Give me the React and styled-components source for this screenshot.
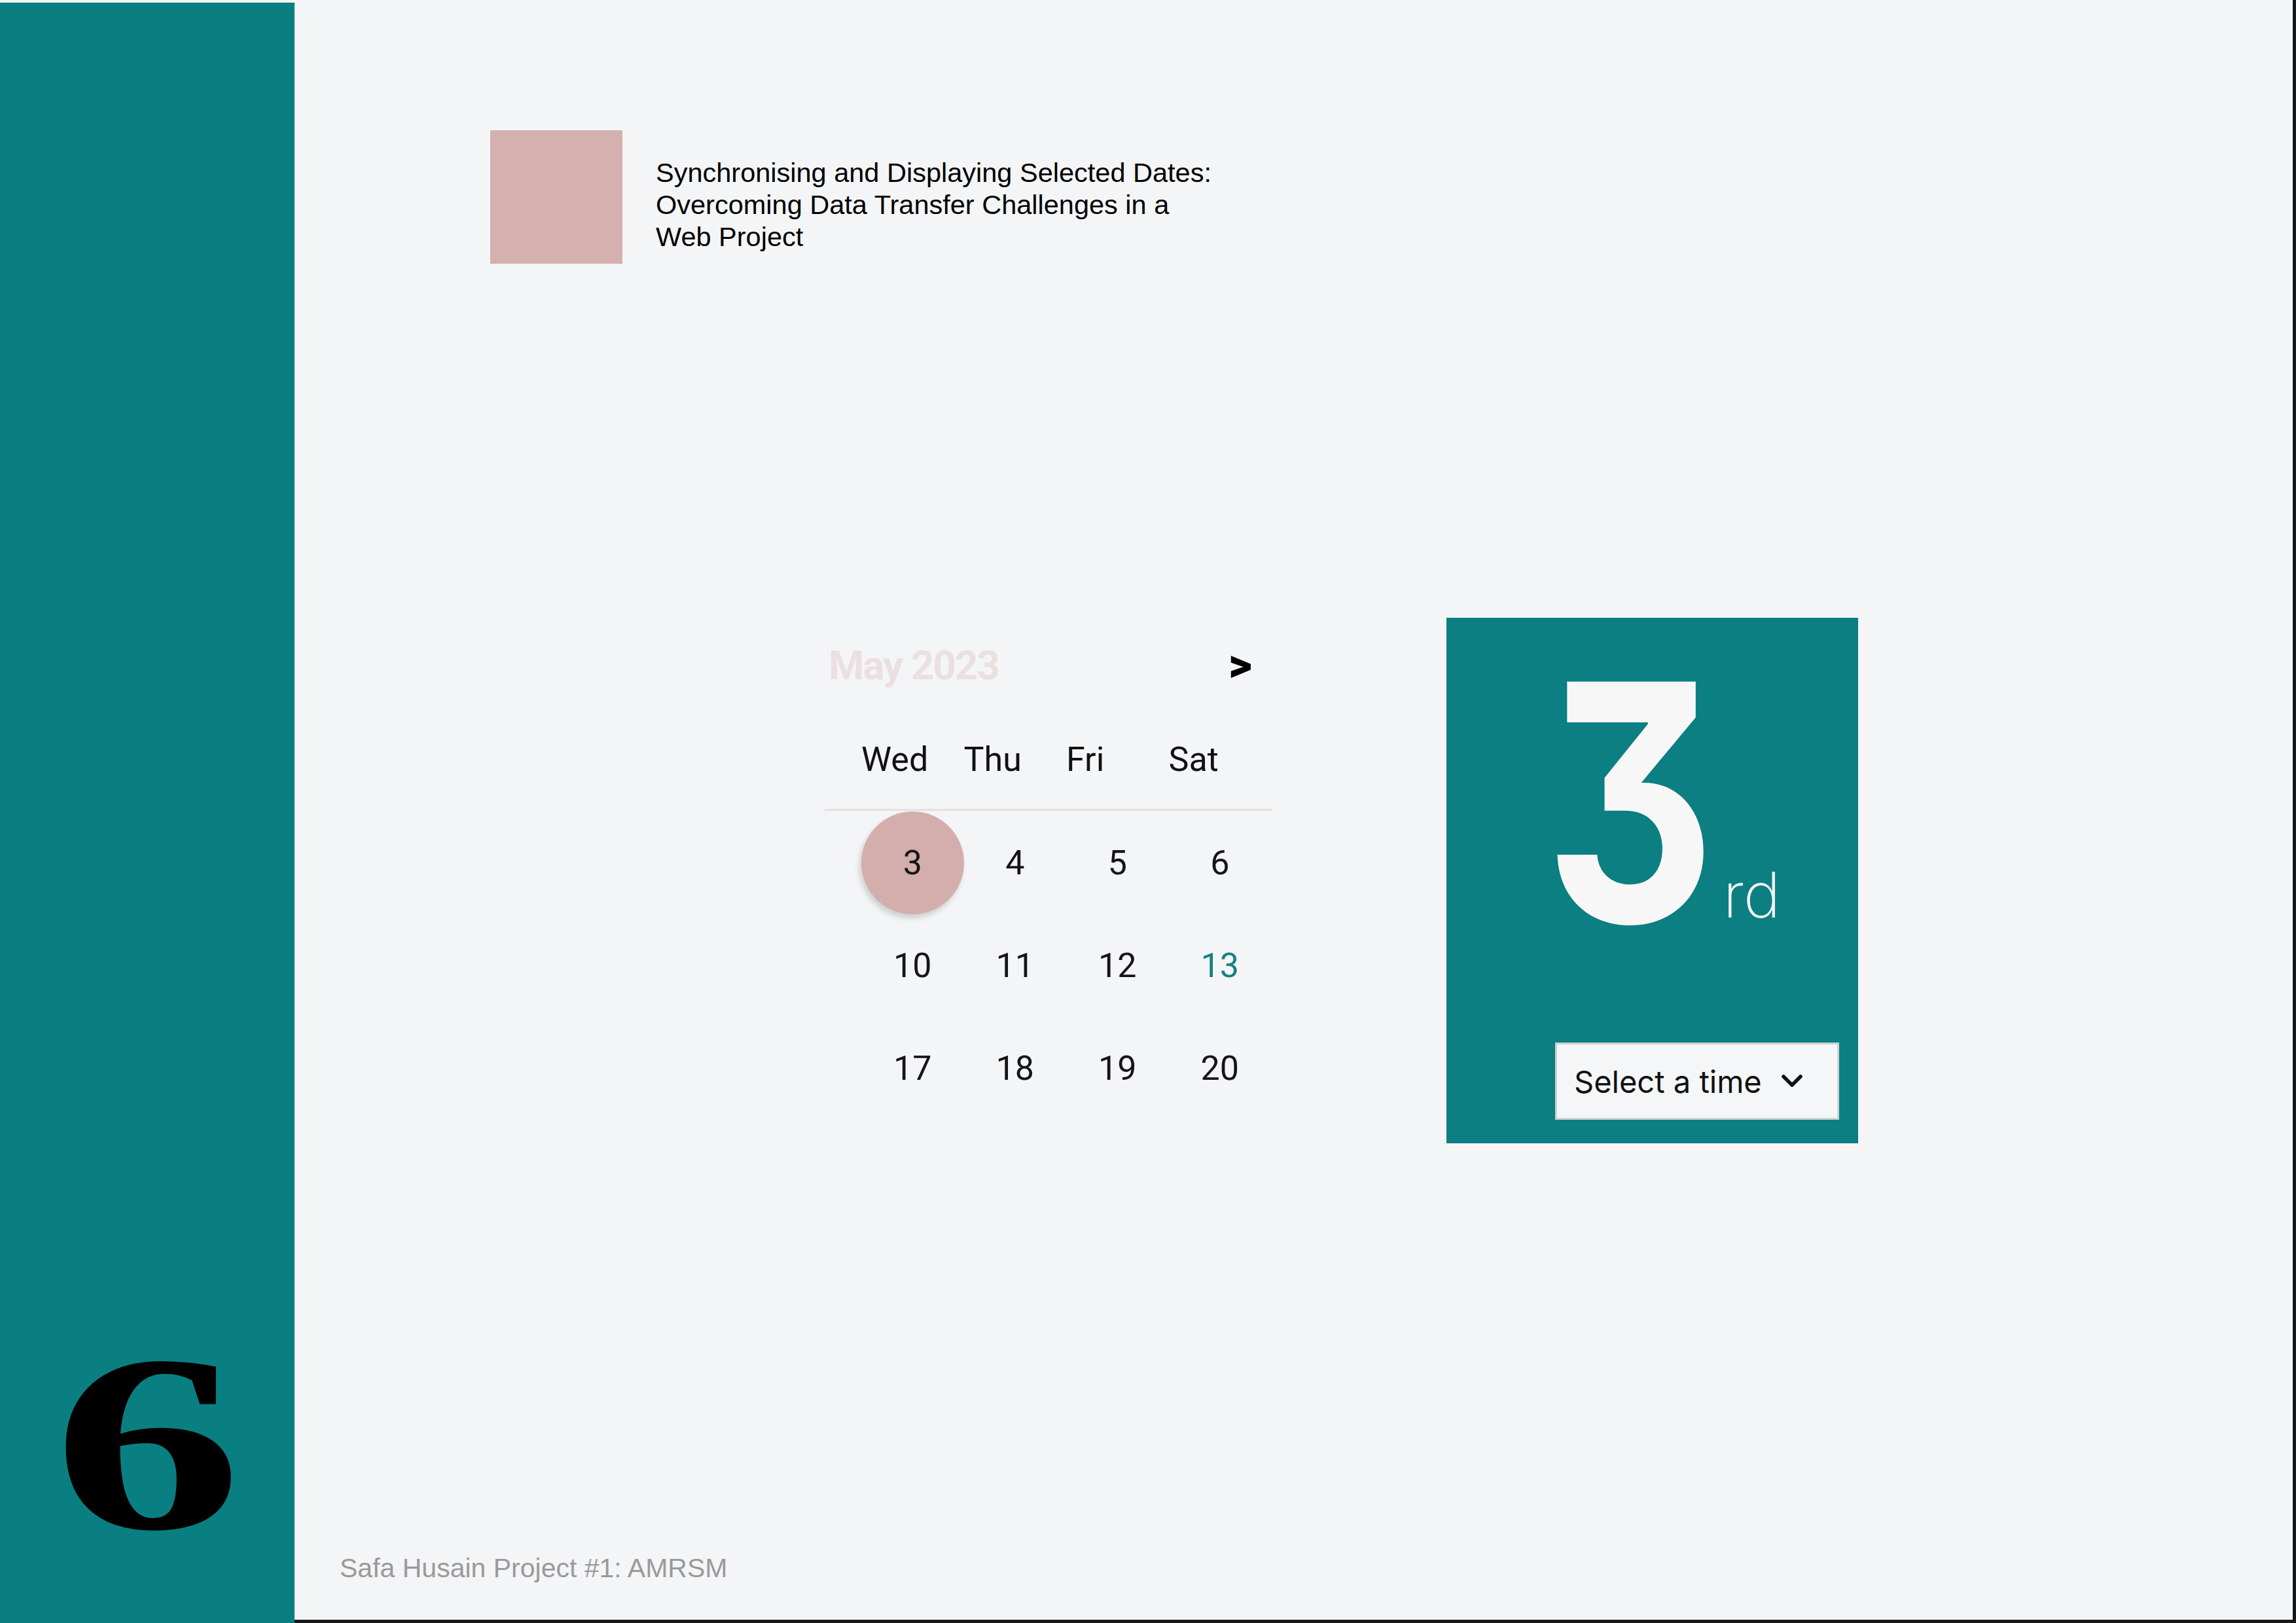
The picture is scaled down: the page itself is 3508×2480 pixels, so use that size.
import React from "react";
import styled, { createGlobalStyle } from "styled-components";

const GlobalStyle = createGlobalStyle`
  html, body {
    margin: 0;
    padding: 0;
    background: #f4f5f7;
  }
  * {
    box-sizing: border-box;
  }
`;

const Slide = styled.div`
  display: flex;
  width: 3508px;
  height: 2480px;
  overflow: hidden;
  background: #f4f5f7;
`;

// Left band with chapter number
const Sidebar = styled.aside`
  flex: 0 0 450px;
  margin-top: 4px;
  background: #0a7f81;
  display: flex;
  flex-direction: column;
  justify-content: flex-end;
  align-items: center;
  padding-bottom: 82px;
`;

const ChapterNumber = styled.div`
  font-family: "Liberation Serif", "Times New Roman", serif;
  font-weight: 700;
  font-size: 385px;
  line-height: 1;
  color: #000;
  transform: scaleX(1.5);
`;

const Main = styled.main`
  flex: 1;
  display: flex;
  flex-direction: column;
  border-right: 5px solid #171717;
  border-bottom: 5px solid #171717;
  padding: 199px 0 55px 0;
`;

const Header = styled.header`
  display: flex;
  align-items: flex-start;
  gap: 51px;
  margin-left: 299px;
`;

const Swatch = styled.div`
  width: 202px;
  height: 204px;
  background: #d4b0ae;
`;

const Title = styled.h1`
  margin: 40px 0 0;
  font-family: "Liberation Sans", Arial, sans-serif;
  font-weight: 400;
  font-size: 41.5px;
  line-height: 49px;
  color: #000;
`;

const Stage = styled.section`
  display: flex;
  align-items: flex-start;
  gap: 266px;
  margin: 541px 0 0 810px;
`;

// Calendar
const Calendar = styled.div`
  width: 684px;
  padding-top: 36px;
  font-family: Roboto, "Liberation Sans", sans-serif;
`;

const CalHeader = styled.div`
  display: flex;
  justify-content: space-between;
  align-items: center;
  height: 72px;
  padding: 0 31px 0 6px;
`;

const MonthLabel = styled.span`
  font-size: 62px;
  font-weight: 700;
  letter-spacing: -2px;
  color: #ebdfe0;
`;

const NextButton = styled.button`
  border: 0;
  background: none;
  padding: 0;
  font-family: Roboto, sans-serif;
  font-size: 70px;
  font-weight: 900;
  line-height: 1;
  color: #000;
`;

const WeekRow = styled.div`
  display: grid;
  grid-template-columns: repeat(4, 1fr);
  align-items: center;
  width: 626px;
  height: 100px;
  margin: 58px 0 26px 56px;
`;

const WeekDay = styled.span`
  font-size: 52px;
  color: #111;
`;

const Divider = styled.div`
  height: 3px;
  background: #e8dfdf;
`;

const DayGrid = styled.div`
  display: grid;
  grid-template-columns: repeat(4, 156.5px);
  grid-auto-rows: 157px;
  margin-left: 56px;
  padding-top: 1px;
`;

const DayCell = styled.div`
  display: flex;
  align-items: center;
  justify-content: center;
  font-size: 52px;
  color: ${(p) => (p.$today ? "#17807f" : "#151515")};
  border-radius: 50%;
  background: ${(p) => (p.$selected ? "#d4aeac" : "transparent")};
  box-shadow: ${(p) =>
    p.$selected ? "-3px 6px 9px rgba(0, 0, 0, 0.16)" : "none"};
`;

// Selected day card
const DayCard = styled.div`
  width: 629px;
  height: 803px;
  background: #0b7f81;
  display: flex;
  flex-direction: column;
  align-items: flex-start;
  padding: 29px 29px 36px 166px;
`;

const BigDay = styled.div`
  margin-left: -16px;
  font-family: Inter, Roboto, sans-serif;
  font-feature-settings: "cv09";
  line-height: 1;
  color: #f7f7f7;
  white-space: nowrap;
`;

const DayDigit = styled.span`
  display: inline-block;
  font-size: 505px;
  font-weight: 700;
  transform: scaleX(0.8);
  transform-origin: left center;
`;

const Suffix = styled.span`
  margin-left: -54px;
  font-size: 96px;
  font-weight: 200;
  vertical-align: 7px;
`;

const TimeSelect = styled.button`
  margin-top: auto;
  width: 434px;
  height: 118px;
  display: flex;
  align-items: center;
  gap: 29px;
  padding: 0 0 0 26px;
  background: #f5f6f8;
  border: 3px solid #cfd2d4;
  font-family: Inter, Roboto, sans-serif;
  font-size: 47px;
  color: #111;
`;

const Footer = styled.footer`
  margin-top: auto;
  padding-left: 69px;
  font-family: "Liberation Sans", Arial, sans-serif;
  font-size: 41px;
  color: #9a9a9a;
`;

const weekDays = ["Wed", "Thu", "Fri", "Sat"];
const days = [3, 4, 5, 6, 10, 11, 12, 13, 17, 18, 19, 20];

const Chevron = () => (
  <svg width="34" height="22" viewBox="0 0 34 22">
    <polyline
      points="4,4 17,17 30,4"
      fill="none"
      stroke="#111"
      strokeWidth="5.5"
      strokeLinecap="round"
      strokeLinejoin="round"
    />
  </svg>
);

export default function App() {
  return (
    <>
      <GlobalStyle />
      <Slide>
        <Sidebar>
          <ChapterNumber>6</ChapterNumber>
        </Sidebar>
        <Main>
          <Header>
            <Swatch />
            <Title>
              Synchronising and Displaying Selected Dates:
              <br />
              Overcoming Data Transfer Challenges in a
              <br />
              Web Project
            </Title>
          </Header>

          <Stage>
            <Calendar>
              <CalHeader>
                <MonthLabel>May 2023</MonthLabel>
                <NextButton>&gt;</NextButton>
              </CalHeader>
              <WeekRow>
                {weekDays.map((d) => (
                  <WeekDay key={d}>{d}</WeekDay>
                ))}
              </WeekRow>
              <Divider />
              <DayGrid>
                {days.map((d) => (
                  <DayCell key={d} $selected={d === 3} $today={d === 13}>
                    {d}
                  </DayCell>
                ))}
              </DayGrid>
            </Calendar>

            <DayCard>
              <BigDay>
                <DayDigit>3</DayDigit>
                <Suffix>rd</Suffix>
              </BigDay>
              <TimeSelect>
                Select a time
                <Chevron />
              </TimeSelect>
            </DayCard>
          </Stage>

          <Footer>Safa Husain Project #1: AMRSM</Footer>
        </Main>
      </Slide>
    </>
  );
}
